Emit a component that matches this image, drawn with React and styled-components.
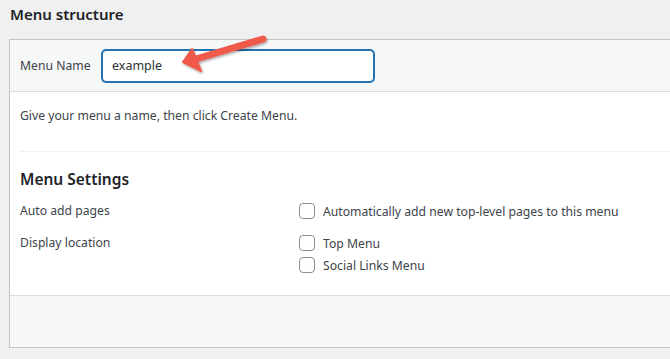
import styled, { createGlobalStyle } from 'styled-components'

const GlobalStyle = createGlobalStyle`
  html, body {
    margin: 0;
    padding: 0;
    background: #f0f0f1;
    overflow: hidden;
  }
  body {
    font-family: 'Noto Sans', 'Open Sans', sans-serif;
    color: #3c434a;
    font-size: 12.2px;
  }
`

const Page = styled.div`
  position: relative;
  width: 670px;
  height: 359px;
  padding-left: 9px;
  box-sizing: border-box;
`

const Title = styled.h2`
  margin: 0;
  padding-top: 3px;
  height: 36px;
  font-size: 15px;
  font-weight: 600;
  color: #1d2327;
  line-height: 22px;
  padding-left: 1px;
`

const Box = styled.div`
  border: 1px solid #c3c4c7;
  border-right: none;
  background: #fff;
`

const Header = styled.div`
  display: flex;
  align-items: center;
  height: 51px;
  padding: 0 10px;
  background: #f6f7f7;
  border-bottom: 1px solid #dcdcde;
`

const Label = styled.label`
  color: #3c434a;
  width: 82px;
  white-space: nowrap;
`

const NameInput = styled.input`
  box-sizing: border-box;
  width: 272px;
  height: 32px;
  padding: 0 9px;
  border: 1px solid #2271b1;
  box-shadow: 0 0 0 1px #2271b1;
  border-radius: 4px;
  font-family: inherit;
  font-size: 12.5px;
  color: #2c3338;
  outline: none;
  background: #fff;
`

const Body = styled.div`
  padding: 0 0 0 10px;
`

const Hint = styled.p`
  margin: 0;
  padding: 14px 0 25px;
  line-height: 20px;
  border-bottom: 1px solid #f0f0f1;
`

const SectionTitle = styled.h3`
  margin: 0;
  padding-top: 16px;
  height: 31px;
  font-size: 15.5px;
  font-weight: 600;
  color: #1d2327;
  line-height: 22px;
`

const Settings = styled.div`
  display: grid;
  grid-template-columns: 279px 1fr;
  row-gap: 12px;
  padding: 2px 0 20px;
`

const SettingLabel = styled.div`
  line-height: 20px;
`

const Options = styled.div`
  display: flex;
  flex-direction: column;
  gap: 2px;
`

const Option = styled.label`
  display: flex;
  align-items: center;
  gap: 8px;
  height: 20px;
  color: #3c434a;
`

const Check = styled.span`
  width: 16px;
  height: 16px;
  box-sizing: border-box;
  border: 1px solid #8c8f94;
  border-radius: 4px;
  background: #fff;
`

const Footer = styled.div`
  height: 51px;
  background: #f6f7f7;
  border-top: 1px solid #dcdcde;
`

const Arrow = styled.svg`
  position: absolute;
  left: 176px;
  top: 30px;
  overflow: visible;
`

export default function App() {
  return (
    <Page>
      <GlobalStyle />
      <Title>Menu structure</Title>
      <Box>
        <Header>
          <Label>Menu Name</Label>
          <NameInput defaultValue='example' />
        </Header>
        <Body>
          <Hint>Give your menu a name, then click Create Menu.</Hint>
          <SectionTitle>Menu Settings</SectionTitle>
          <Settings>
            <SettingLabel>Auto add pages</SettingLabel>
            <Options>
              <Option>
                <Check />
                Automatically add new top-level pages to this menu
              </Option>
            </Options>
            <SettingLabel>Display location</SettingLabel>
            <Options>
              <Option>
                <Check />
                Top Menu
              </Option>
              <Option>
                <Check />
                Social Links Menu
              </Option>
            </Options>
          </Settings>
        </Body>
        <Footer />
      </Box>
      <Arrow width='100' height='50' viewBox='0 0 100 50'>
        <defs>
          <filter id='sh' x='-20%' y='-40%' width='140%' height='180%'>
            <feDropShadow dx='1' dy='1.5' stdDeviation='1.2' floodColor='#000' floodOpacity='0.35' />
          </filter>
        </defs>
        <g filter='url(#sh)' fill='#f05a4b' stroke='#f05a4b' strokeLinejoin='round'>
          <line x1='87' y1='9' x2='20' y2='29' strokeWidth='7' strokeLinecap='round' />
          <polygon points='7,32 16,19 25,41' strokeWidth='2' />
        </g>
      </Arrow>
    </Page>
  )
}
